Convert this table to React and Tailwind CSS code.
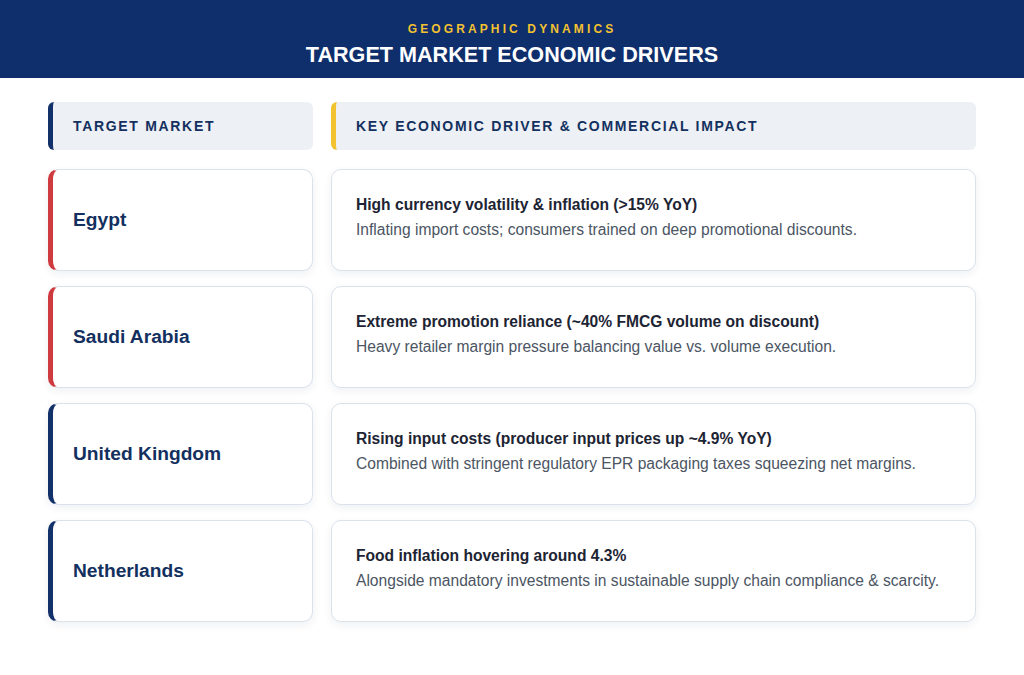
import React from 'react';

const rows = [
  {
    market: 'Egypt',
    accent: 'border-l-[#cf3a3f]',
    title: 'High currency volatility & inflation (>15% YoY)',
    desc: 'Inflating import costs; consumers trained on deep promotional discounts.',
  },
  {
    market: 'Saudi Arabia',
    accent: 'border-l-[#cf3a3f]',
    title: 'Extreme promotion reliance (~40% FMCG volume on discount)',
    desc: 'Heavy retailer margin pressure balancing value vs. volume execution.',
  },
  {
    market: 'United Kingdom',
    accent: 'border-l-[#12306a]',
    title: 'Rising input costs (producer input prices up ~4.9% YoY)',
    desc: 'Combined with stringent regulatory EPR packaging taxes squeezing net margins.',
  },
  {
    market: 'Netherlands',
    accent: 'border-l-[#12306a]',
    title: 'Food inflation hovering around 4.3%',
    desc: 'Alongside mandatory investments in sustainable supply chain compliance & scarcity.',
  },
];

export default function App() {
  return (
    <div className="w-[1024px] h-[675px] bg-white font-['Liberation_Sans',Arial,sans-serif] overflow-hidden">
      {/* Header band */}
      <div className="h-[78px] bg-[#0e2e6c] flex flex-col items-center pt-[23px]">
        <div className="text-[12px] font-bold tracking-[0.26em] text-[#f2c230] leading-none">
          GEOGRAPHIC DYNAMICS
        </div>
        <div className="mt-[9px] text-[21.6px] font-bold text-white leading-none">
          TARGET MARKET ECONOMIC DRIVERS
        </div>
      </div>

      <div className="px-[48px] pt-[24px]">
        {/* Column headers */}
        <div className="grid grid-cols-[265px_1fr] gap-x-[18px]">
          <div className="h-[48px] rounded-[6px] bg-[#edf0f5] border-l-[5px] border-l-[#12306a] flex items-center pl-[20px]">
            <span className="text-[14px] font-bold tracking-[0.12em] text-[#13305f]">TARGET MARKET</span>
          </div>
          <div className="h-[48px] rounded-[6px] bg-[#edf0f5] border-l-[5px] border-l-[#f2c230] flex items-center pl-[20px]">
            <span className="text-[14px] font-bold tracking-[0.12em] text-[#13305f]">
              KEY ECONOMIC DRIVER &amp; COMMERCIAL IMPACT
            </span>
          </div>
        </div>

        {/* Rows */}
        <div className="mt-[19px] flex flex-col gap-[15px]">
          {rows.map((r) => (
            <div key={r.market} className="grid grid-cols-[265px_1fr] gap-x-[18px]">
              <div
                className={`h-[102px] rounded-[10px] bg-white border border-[#dbe2ec] border-l-[5px] ${r.accent} shadow-[0_3px_8px_rgba(15,40,90,0.07)] flex items-center pl-[20px]`}
              >
                <span className="text-[19.2px] font-bold text-[#13305f]">{r.market}</span>
              </div>
              <div className="h-[102px] rounded-[10px] bg-white border border-[#dbe2ec] shadow-[0_3px_8px_rgba(15,40,90,0.07)] flex flex-col justify-center pl-[24px] pb-[6px]">
                <div className="text-[15.6px] font-bold text-[#1d2433] leading-[20px]">{r.title}</div>
                <div className="mt-[5px] text-[15.6px] text-[#4b5563] leading-[20px]">{r.desc}</div>
              </div>
            </div>
          ))}
        </div>
      </div>
    </div>
  );
}
